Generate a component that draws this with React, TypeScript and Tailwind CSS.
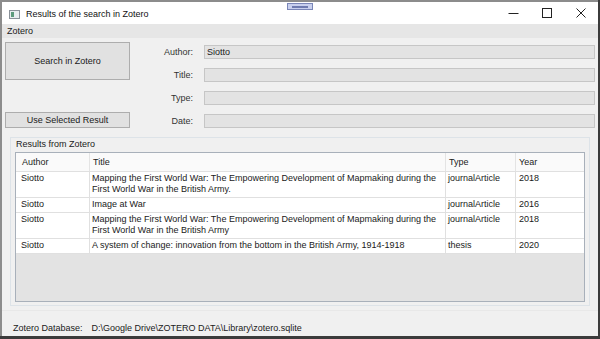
import React from "react";

type Row = { author: string; title: string[]; type: string; year: string };

const rows: Row[] = [
  {
    author: "Siotto",
    title: [
      "Mapping the First World War: The Empowering Development of Mapmaking during the",
      "First World War in the British Army.",
    ],
    type: "journalArticle",
    year: "2018",
  },
  { author: "Siotto", title: ["Image at War"], type: "journalArticle", year: "2016" },
  {
    author: "Siotto",
    title: [
      "Mapping the First World War: The Empowering Development of Mapmaking during the",
      "First World War in the British Army",
    ],
    type: "journalArticle",
    year: "2018",
  },
  {
    author: "Siotto",
    title: ["A system of change: innovation from the bottom in the British Army, 1914-1918"],
    type: "thesis",
    year: "2020",
  },
];

const fields = [
  { label: "Author:", value: "Siotto" },
  { label: "Title:", value: "" },
  { label: "Type:", value: "" },
  { label: "Date:", value: "" },
];

function AppIcon() {
  return (
    <svg width="11" height="9" viewBox="0 0 11 9" className="shrink-0">
      <rect x="0.5" y="0.5" width="10" height="8" fill="#e8ecef" stroke="#8a9199" />
      <rect x="2" y="2" width="3" height="5" fill="#5c9a7c" />
    </svg>
  );
}

function WinButtons() {
  return (
    <div className="flex h-full items-center">
      <div className="flex w-[34px] justify-center">
        <svg width="11" height="11" viewBox="0 0 11 11">
          <line x1="0.5" y1="5.5" x2="10.5" y2="5.5" stroke="#222" strokeWidth="1" />
        </svg>
      </div>
      <div className="flex w-[34px] justify-center">
        <svg width="10" height="10" viewBox="0 0 10 10">
          <rect x="0.5" y="0.5" width="9" height="9" fill="none" stroke="#222" strokeWidth="1" />
        </svg>
      </div>
      <div className="flex w-[34px] justify-center">
        <svg width="10" height="10" viewBox="0 0 10 10">
          <path d="M0.5 0.5 L9.5 9.5 M9.5 0.5 L0.5 9.5" stroke="#222" strokeWidth="1" />
        </svg>
      </div>
    </div>
  );
}

export default function App() {
  return (
    <div
      className="relative h-[339px] w-[600px] overflow-hidden bg-[#3b3b3b] text-[9px] leading-[12px] text-[#1a1a1a]"
      style={{ fontFamily: '"Liberation Sans", Arial, sans-serif' }}
    >
      <div className="flex h-[336px] w-[598px] flex-col border-l-2 border-t-2 border-[#8c8c8c] bg-[#f0f0f0]">
        {/* title bar */}
        <div className="relative flex h-[22px] items-center justify-between bg-white pl-[7px]">
          <div className="flex items-center gap-[6px] pt-[2px]">
            <AppIcon />
            <span className="text-[9px] text-[#111]">Results of the search in Zotero</span>
          </div>
          <WinButtons />
          <div className="absolute left-[285px] top-[1px] flex h-[7px] w-[26px] items-center justify-center border border-[#7a86b8] bg-[#c9d0ee]">
            <div className="h-[2px] w-[16px] bg-[#6f7bb0]" />
          </div>
        </div>

        {/* menu */}
        <div className="flex h-[14px] items-center bg-[#e6e6e6] px-[5px]">
          <span>Zotero</span>
        </div>

        {/* search form */}
        <div className="flex pl-[3px] pr-[3px] pt-[4px]">
          <div className="flex w-[125px] flex-col">
            <button className="h-[38px] w-full border border-[#adadad] bg-[#e1e1e1] text-[9px]">
              Search in Zotero
            </button>
            <button className="mt-[32px] h-[16px] w-full border border-[#adadad] bg-[#e1e1e1] text-[9px]">
              Use Selected Result
            </button>
          </div>
          <div className="ml-[10px] grid flex-1 grid-cols-[53px_1fr] gap-x-[11px] gap-y-[9px] pt-[3px]">
            {fields.map((f) => (
              <React.Fragment key={f.label}>
                <div className="flex h-[14px] items-center justify-end text-[#333]">{f.label}</div>
                <div className="flex h-[14px] items-center border border-[#c6c6c6] bg-[#e3e3e3] px-[2px]">
                  {f.value}
                </div>
              </React.Fragment>
            ))}
          </div>
        </div>

        {/* results group */}
        <div className="mx-[8px] mt-[9px] flex h-[169px] flex-col border border-[#dde3e8] px-[4px] pb-[3px]">
          <div className="h-[14px] pl-[1px] leading-[12px]">Results from Zotero</div>
          <div className="flex flex-1 flex-col border border-[#a8b0ba] bg-[#e3e3e3]">
            <div className="flex h-[18px] items-center bg-[#fafafa] text-[#222]">
              <div className="w-[73px] pl-[6px]">Author</div>
              <div className="h-full w-px bg-[#e4e4e4]" />
              <div className="w-[355px] pl-[3px]">Title</div>
              <div className="h-full w-px bg-[#e4e4e4]" />
              <div className="w-[69px] pl-[3px]">Type</div>
              <div className="h-full w-px bg-[#e4e4e4]" />
              <div className="flex-1 pl-[3px]">Year</div>
            </div>
            {rows.map((r, i) => (
              <div key={i} className="flex border-t border-[#e0e0e0] bg-white leading-[11px]">
                <div className="w-[73px] pb-[2px] pl-[5px] pt-[1px]">{r.author}</div>
                <div className="w-px bg-[#e0e0e0]" />
                <div className="w-[355px] pb-[2px] pl-[2px] pt-[1px]">
                  {r.title.map((t) => (
                    <div key={t} className="h-[11px] whitespace-nowrap">
                      {t}
                    </div>
                  ))}
                </div>
                <div className="w-px bg-[#e0e0e0]" />
                <div className="w-[69px] pb-[2px] pl-[2px] pt-[1px]">{r.type}</div>
                <div className="w-px bg-[#e0e0e0]" />
                <div className="flex-1 pb-[2px] pl-[3px] pt-[1px]">{r.year}</div>
              </div>
            ))}
            <div className="border-t border-[#e0e0e0]" />
          </div>
        </div>

        {/* footer */}
        <div className="mt-[4px] flex flex-1 items-end gap-[9px] border-t border-[#e8e8e8] pb-[2px] pl-[11px]">
          <span>Zotero Database:</span>
          <span>D:\Google Drive\ZOTERO DATA\Library\zotero.sqlite</span>
        </div>
      </div>
    </div>
  );
}
